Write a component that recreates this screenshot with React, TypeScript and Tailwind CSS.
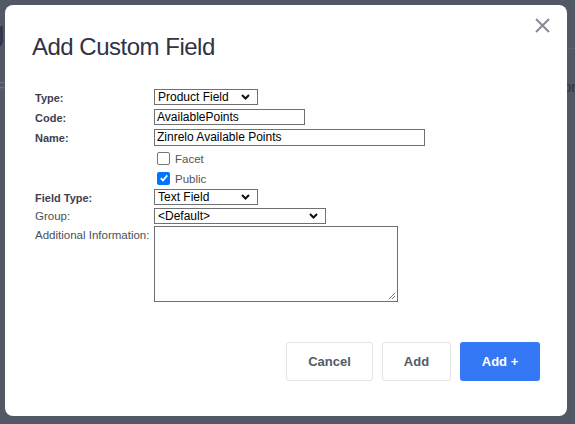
import React from 'react'

function Chevron() {
  return (
    <svg width="9" height="6" viewBox="0 0 9 6" className="shrink-0">
      <path d="M1 1l3.5 3.5L8 1" fill="none" stroke="#111" strokeWidth="2" />
    </svg>
  )
}

function FakeSelect({ value, width }: { value: string; width: string }) {
  return (
    <div
      className={`${width} h-[16px] border border-[#707070] bg-white flex items-center justify-between pl-[3px] pr-[7px] text-[12px] leading-none text-black`}
    >
      <span>{value}</span>
      <Chevron />
    </div>
  )
}

function FakeInput({ value, width, height }: { value: string; width: string; height: string }) {
  return (
    <div
      className={`${width} ${height} border border-[#707070] bg-white flex items-center pl-[2px] text-[12px] leading-none text-black`}
    >
      {value}
    </div>
  )
}

function Check({ checked, label }: { checked?: boolean; label: string }) {
  return (
    <div className="flex items-center h-[20px] pl-[3px]">
      {checked ? (
        <div className="w-[13px] h-[13px] rounded-[2px] bg-[#0075ff] flex items-center justify-center">
          <svg width="10" height="10" viewBox="0 0 10 10">
            <path d="M1.8 5.2l2.2 2.2L8.3 2.4" fill="none" stroke="white" strokeWidth="1.8" />
          </svg>
        </div>
      ) : (
        <div className="w-[13px] h-[13px] rounded-[2px] border border-[#767676] bg-white" />
      )}
      <span className="ml-[5px] mt-[4px] text-[11.5px] text-[#555]">{label}</span>
    </div>
  )
}

export default function App() {
  return (
    <div
      className="relative w-[575px] h-[424px] overflow-hidden bg-[#535866]"
      style={{ fontFamily: '"Liberation Sans", Arial, sans-serif' }}
    >
      {/* page behind the overlay */}
      <div className="absolute left-[-11px] top-[16px] text-[28px] leading-[32px] text-[#2f3342]">g</div>
      <div className="absolute left-[-4px] top-[78px] text-[15px] leading-[18px] text-[#6c717c]">F</div>
      <div className="absolute left-[563px] top-[78px] text-[15px] leading-[18px] text-[#2f3342]">or</div>
      <div className="absolute left-[560px] top-[48px] w-[20px] h-px bg-[#5e6270]" />

      {/* modal */}
      <div className="absolute left-[5px] top-[5px] w-[562px] h-[411px] bg-white rounded-[8px] flex flex-col">
        <div className="flex justify-between items-start">
          <h2 className="ml-[27px] mt-[27px] text-[24px] leading-[30px] tracking-[-0.5px] text-[#2f3344]">
            Add Custom Field
          </h2>
          <button className="mt-[13px] mr-[17px] p-0">
            <svg width="15" height="15" viewBox="0 0 15 15">
              <path d="M1 1l13 13M14 1L1 14" stroke="#878a92" strokeWidth="2" />
            </svg>
          </button>
        </div>

        <div className="mt-[25px] ml-[30px] flex flex-col text-[#3d4150]">
          <div className="flex items-center h-[20px]">
            <div className="w-[119px] text-[11px] font-bold pt-[2px]">Type:</div>
            <FakeSelect value="Product Field" width="w-[104px]" />
          </div>
          <div className="flex items-center h-[20px]">
            <div className="w-[119px] text-[11px] font-bold pt-[2px]">Code:</div>
            <FakeInput value="AvailablePoints" width="w-[151px]" height="h-[16px]" />
          </div>
          <div className="flex items-center h-[20px]">
            <div className="w-[119px] text-[11px] font-bold pt-[2px]">Name:</div>
            <FakeInput value="Zinrelo Available Points" width="w-[271px]" height="h-[17px]" />
          </div>
          <div className="pl-[119px] mt-[1px]">
            <Check label="Facet" />
            <Check checked label="Public" />
          </div>
          <div className="flex items-center h-[18px]">
            <div className="w-[119px] text-[11px] font-bold pt-[2px]">Field Type:</div>
            <FakeSelect value="Text Field" width="w-[104px]" />
          </div>
          <div className="flex items-center h-[20px]">
            <div className="w-[119px] text-[11.5px] pt-[2px] text-[#4a4e5c]">Group:</div>
            <FakeSelect value="<Default>" width="w-[172px]" />
          </div>
          <div className="flex items-start">
            <div className="w-[119px] text-[11.5px] pt-[1px] text-[#4a4e5c] whitespace-nowrap">
              Additional Information:
            </div>
            <div className="relative w-[244px] h-[76px] border border-[#707070] bg-white">
              <svg width="8" height="8" viewBox="0 0 8 8" className="absolute right-[1px] bottom-[1px]">
                <path d="M1 7L7 1M4 7L7 4" stroke="#777" strokeWidth="1" />
              </svg>
            </div>
          </div>
        </div>

        <div className="mt-auto mb-[35px] mr-[27px] flex justify-end gap-[9px]">
          <button className="w-[87px] h-[39px] rounded-[3px] border border-[#e3e3e3] bg-white text-[13px] font-bold text-[#555a66]">
            Cancel
          </button>
          <button className="w-[69px] h-[39px] rounded-[3px] border border-[#e3e3e3] bg-white text-[13px] font-bold text-[#555a66]">
            Add
          </button>
          <button className="w-[80px] h-[39px] rounded-[3px] bg-[#3478f6] text-[13px] font-bold text-white">
            Add +
          </button>
        </div>
      </div>
    </div>
  )
}
